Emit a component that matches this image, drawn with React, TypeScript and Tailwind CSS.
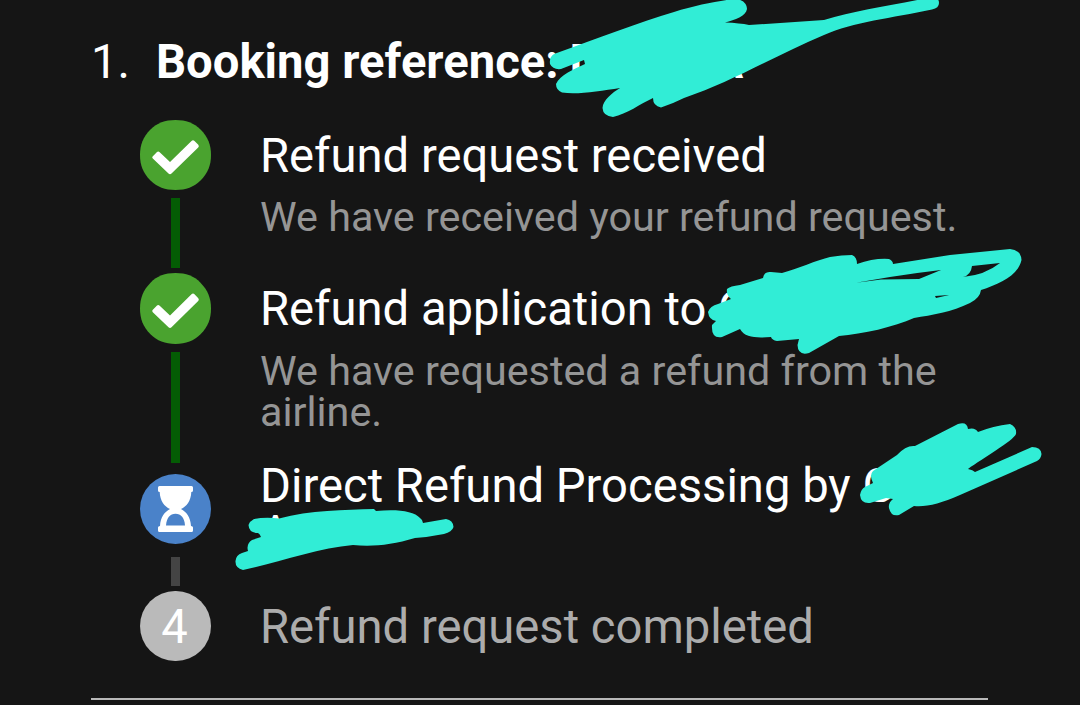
import type { ReactNode } from 'react';

interface StepProps {
  marker: ReactNode;
  line?: string;
  textClass: string;
  title: ReactNode;
  description?: string;
  descriptionClass?: string;
  muted?: boolean;
}

function CheckMarker() {
  return (
    <svg viewBox="0 0 71 70" preserveAspectRatio="none" className="h-full w-full">
      <path
        d="M35.5 0C46 0 54 3 60.500 9.500C68 17 71 25 71 35C71 45 68 53 60.500 60.500C54 67 46 70 35.500 70C25 70 17 67 10.500 60.500C3 53 0 45 0 35C0 25 3 17 10.500 9.500C17 3 25 0 35.500 0Z"
        fill="#4aa32f"
      />
      <path
        d="M12.600 36.500L17 32.100Q18.300 31 19.700 32.300L30 42L51.500 21Q53 19.600 54.500 21L58.300 24.800Q59.500 26.200 58.200 27.600L31.500 53.600Q30 55 28.500 53.600L12.800 38.600Q11.700 37.500 12.600 36.500Z"
        fill="white"
      />
    </svg>
  );
}

function HourglassMarker() {
  return (
    <svg viewBox="0 0 71 70" className="h-full w-full">
      <ellipse cx="35.500" cy="35" rx="35.500" ry="35" fill="#4a82c9" />
      <path
        d="M19.500 12H51.500Q53 12 53 13.500V16.500Q53 18 51.300 18C51 27 46.500 32.500 41 35C46.500 38 50.500 43 51 52Q53 52 53 53.500V56.500Q53 58 51.500 58H19.500Q18 58 18 56.500V53.500Q18 52 20 52C20.500 43 24.500 38 30 35C24.500 32.500 20 27 19.700 18Q18 18 18 16.500V13.500Q18 12 19.500 12Z"
        fill="white"
      />
      <path d="M26 51.500C26.500 44 30 39.800 35.500 39.800C41 39.800 44.500 44 45 51.500Z" fill="#4a82c9" />
    </svg>
  );
}

function Step({ marker, line, textClass, title, description, descriptionClass = 'mt-[17px]', muted = false }: StepProps) {
  return (
    <li className="flex">
      <div className="flex w-[71px] shrink-0 flex-col items-center">
        {marker}
        {line && <div className={`w-[9px] ${line}`} />}
      </div>
      <div className={`ml-[49px] h-0 w-[740px] ${textClass}`}>
        <h2 className={`text-[47.200px] leading-[47px] ${muted ? 'text-[#acacac]' : 'text-white'}`}>{title}</h2>
        {description && (
          <p className={`w-[720px] text-[41.300px] leading-[41px] text-[#959595] ${descriptionClass}`}>{description}</p>
        )}
      </div>
    </li>
  );
}

// Marker pen strokes drawn over the private details
function Redactions() {
  return (
    <svg viewBox="0 0 1080 705" className="pointer-events-none absolute inset-0 h-full w-full" fill="#31edd6">
      <path d="M554 54C599 38 640 22 674 12C696 5 718 1 734 -1C743 -1 747 4 747 9C746 16 735 20 725 22.500Q740 23 749 25L824 20C855 10 892 6 931 -3Q939 -3 939 3Q939 8 932 9.500C892 18 853 22 824 35C778 54 732 82 684 98Q672 104 661 107.500Q653 106 653 98C640 104 627 114 613 117Q603 116 602.500 108C603 100 612 93 620 88C600 91 577 95 562 92.500Q556 90 556 84C560 75 574 69 585 64L584 60L561 69Q553 70 550 64Q549 57 554 54Z" />
      <path d="M727 289Q730 286 740 285L763 278Q764 271 771 272L782 273C797 269 817 260 830 257Q842 255 852 255Q857 257 857 264Q874 258 889 259Q893 261 893 264L950 255L1010 249Q1021 250 1021.500 260C1018 276 999 284 981 290Q980 298 970 303C952 312 932 315 914 318C894 327 863 334 839 336L809 353Q798 356 797.500 345L799 339L777 341Q772 340 771 337C757 338 745 338 740 329L722 337Q711 339 712 325L716 321Q709 320 708 312Q710 306 718 304L731 299Q726 295 727 289ZM856 282.800L881 279.500L919 279L941 270Q915 273 890 277ZM963 277Q985 275 1000 263L972 266Q971 275 963 277ZM935 296L949 295L936 298Z" fillRule="evenodd" />
      <path d="M873 471L897 455Q906 445 915 446L958 424Q967 421 968 429Q975 427 978 432Q993 426 1010 424Q1017 427 1016 434C1013 441 983 458 968 469Q973 470 975 472L1032 447Q1041 447 1041.500 454Q1041 459 1037 461L960 495Q931 508 914 506L899 515Q891 517 889 508Q888 503 893 499L886 498L870 503Q861 504 860 495Q861 489 865 487L873 483Q869 475 873 471Z" />
      <path d="M254 519Q265 517 279 518.500C310 510 345 510 374 509L376 511C397 509 414 511 420 518Q423 520 423 523L446 519Q453 520 453.500 527Q452 532 444 534Q429 537 415 538C392 545 372 547 353 545C318 548 276 563 243 570Q235 568 235.500 561Q236 555 242 553L248 551Q246 544 252 540L261 537Q260 534 258 533Q249 533 248.500 525Q250 521 254 519Z" />
    </svg>
  );
}

export default function App() {
  return (
    <main className="relative h-[705px] w-[1080px] overflow-hidden bg-[#151515] font-['Roboto',sans-serif]">
      <header className="flex h-[120px] items-start pl-[91px] pt-[39px] text-[47.200px] leading-[47px] text-white">
        <span className="w-[65px]">1.</span>
        <h1 className="flex whitespace-nowrap font-bold">
          Booking reference:
          <span className="ml-[11px] w-[142px]">D</span>
          <span>A</span>
        </h1>
      </header>

      <ol className="pl-[140px]">
        <Step
          marker={<div className="h-[70px] w-[71px]"><CheckMarker /></div>}
          line="mt-[8px] mb-[5px] h-[70px] bg-[#045c04]"
          textClass="pt-[13px]"
          title="Refund request received"
          description="We have received your refund request."
        />
        <Step
          marker={<div className="h-[71px] w-[71px]"><CheckMarker /></div>}
          line="mt-[8px] mb-[11px] h-[111px] bg-[#045c04]"
          textClass="pt-[13px]"
          title="Refund application to G"
          description="We have requested a refund from the airline."
          descriptionClass="mt-[18px]"
        />
        <Step
          marker={<div className="h-[70px] w-[71px]"><HourglassMarker /></div>}
          line="mt-[13px] mb-[5px] h-[29px] bg-[#444444]"
          textClass="-mt-[11px]"
          title={<>Direct Refund Processing by G<br />A</>}
        />
        <Step
          marker={
            <div className="flex h-[70px] w-[71px] items-center justify-center rounded-full bg-[#bababa] pt-[3px] pr-[2px] text-[47.200px] leading-none text-white">
              4
            </div>
          }
          textClass="pt-[13px]"
          title="Refund request completed"
          muted
        />
      </ol>

      <hr className="ml-[91px] mt-[37px] h-[2px] w-[897px] border-0 bg-[#b8b8b8]" />
      <Redactions />
    </main>
  );
}
